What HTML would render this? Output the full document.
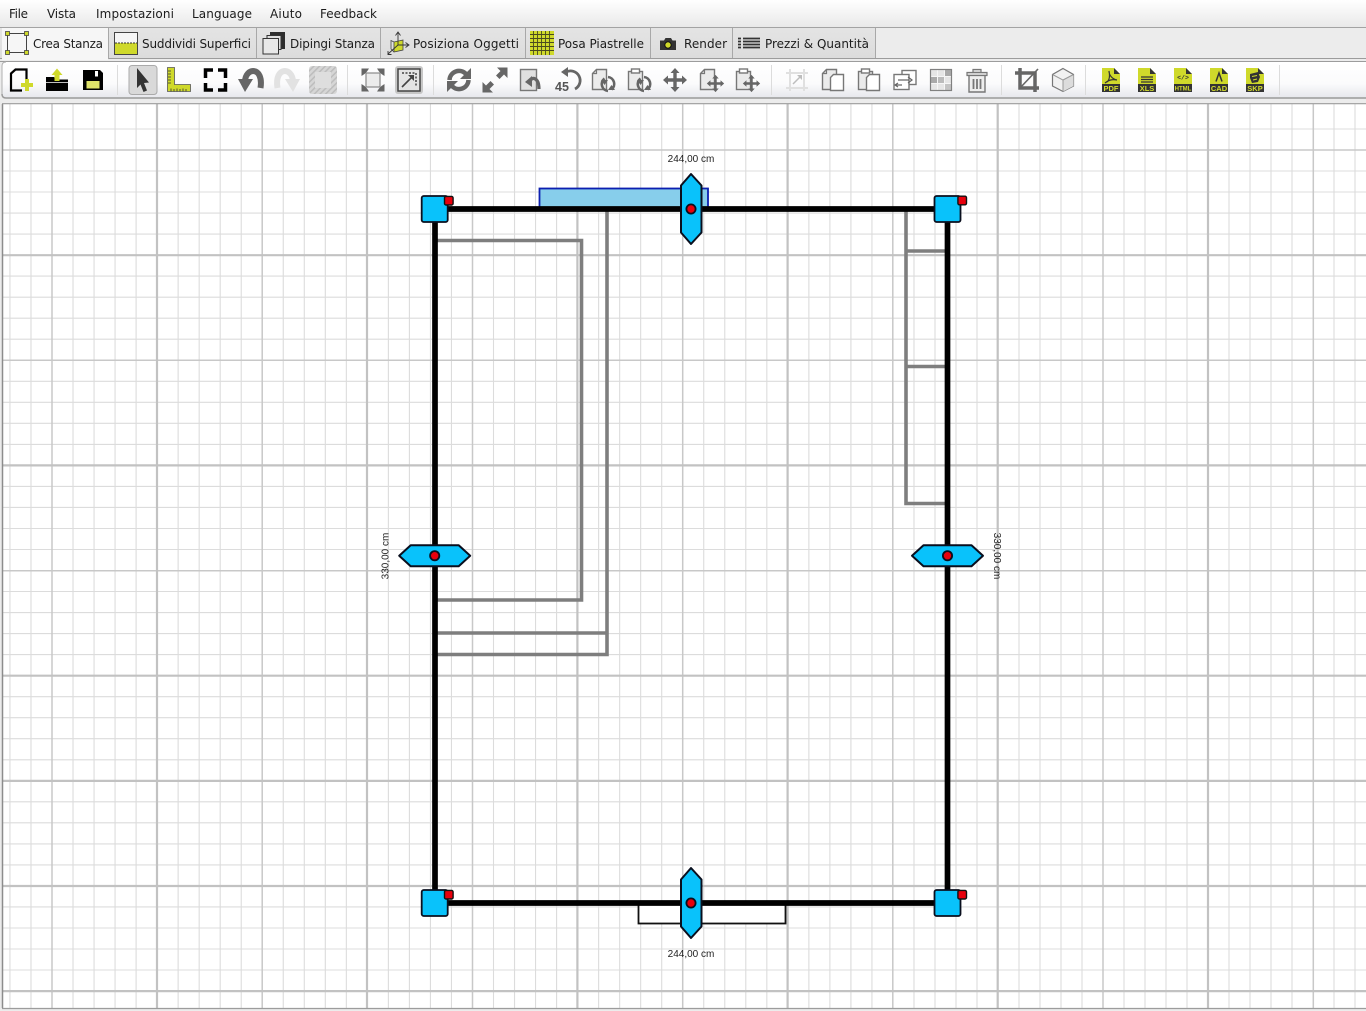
<!DOCTYPE html>
<html lang="it">
<head>
<meta charset="utf-8">
<title>Crea Stanza</title>
<style>
html,body{margin:0;padding:0;background:#ececec;width:1366px;height:1011px;overflow:hidden}
svg{display:block}
.m{font:12px "DejaVu Sans","Liberation Sans",sans-serif;fill:#1c1c1c}
.d{font:10px "Liberation Sans",Arial,sans-serif;fill:#222}
.f{font:bold 7.5px "Liberation Sans",Arial,sans-serif;fill:#d3dc2e}
</style>
</head>
<body>
<svg width="1366" height="1011" viewBox="0 0 1366 1011" xmlns="http://www.w3.org/2000/svg">
<defs>
<linearGradient id="mg" x1="0" y1="0" x2="0" y2="1"><stop offset="0" stop-color="#fff"/><stop offset="1" stop-color="#e9e9e9"/></linearGradient>
<linearGradient id="tb" x1="0" y1="0" x2="0" y2="1"><stop offset="0" stop-color="#fff"/><stop offset=".6" stop-color="#fbfbfc"/><stop offset="1" stop-color="#e6e7ec"/></linearGradient>
<linearGradient id="tab" x1="0" y1="0" x2="0" y2="1"><stop offset="0" stop-color="#e4e4e4"/><stop offset="1" stop-color="#dcdcdc"/></linearGradient>
<pattern id="ht" width="4" height="4" patternUnits="userSpaceOnUse" patternTransform="rotate(-45)"><rect width="4" height="4" fill="#d6d6d6"/><rect width="4" height="1.5" fill="#bdbdbd"/></pattern>
<g id="page"><path d="M-10.5 9.5V-6.5L-6.5-10.5H3.5V9.5Z" fill="#ebebeb" stroke="#777" stroke-width="1.4"/><path d="M-10.5-6.5H-6.5V-10.5" fill="none" stroke="#777" stroke-width="1.2"/></g>
<g id="clip"><rect x="-10.5" y="-8.5" width="14" height="18" fill="#ebebeb" stroke="#777" stroke-width="1.4"/><rect x="-7.5" y="-11" width="8" height="4" fill="#fff" stroke="#777" stroke-width="1.4"/></g>
<g id="rot"><path d="M-3.5-5.5A7 7 0 0 0 0 7" fill="none" stroke="#666" stroke-width="2.6"/><path d="M3.500 5.500A7 7 0 0 0 0-7" fill="none" stroke="#666" stroke-width="2.6"/><path d="M-7-5H0L-3.500 0ZM7 5H0L3.500 0Z" fill="#666" transform="translate(0,1)"/></g>
<g id="mv"><path d="M0-12L-4.500-7H-1.700V-1.700H-7V-4.500L-12 0L-7 4.500V1.700H-1.700V7H-4.500L0 12L4.500 7H1.700V1.700H7V4.500L12 0L7-4.500V-1.700H1.700V-7H4.500Z" fill="#666"/></g>
<g id="fi"><path d="M-9-12H3L9-6V12H-9Z" fill="#cfd92b"/><path d="M3-12L9-6H3Z" fill="#333"/><rect x="-9" y="4" width="18" height="8" fill="#333"/></g>
<g id="hv"><path d="M-10-23.500L0-35L10.500-23.500V23.500L0 35L-10 23.500Z" fill="#09c2fb" stroke="#0a0f1e" stroke-width="2" stroke-linejoin="round"/><circle r="4.600" fill="#e8000c" stroke="#0a0f1e" stroke-width="1.800"/></g>
<g id="hh"><path d="M-35.500 0L-24-10.500H24L35.500 0L24 10.500H-24Z" fill="#09c2fb" stroke="#0a0f1e" stroke-width="2" stroke-linejoin="round"/><circle r="4.600" fill="#e8000c" stroke="#0a0f1e" stroke-width="1.800"/></g>
<g id="cn"><rect x="-13" y="-13" width="26" height="26" rx="2" fill="#09c2fb" stroke="#0a0f1e" stroke-width="1.800"/></g>
<g id="rd"><rect x="-4.300" y="-4.300" width="8.600" height="8.600" rx="1.500" fill="#e8000c" stroke="#111" stroke-width="1.400"/></g>
</defs>

<rect width="1366" height="1011" fill="#ececec"/>
<!-- menu -->
<rect width="1366" height="27" fill="url(#mg)"/>
<rect y="27" width="1366" height="1" fill="#a3a3a3"/>
<text class="m" x="9" y="18" textLength="19">File</text>
<text class="m" x="47" y="18" textLength="29">Vista</text>
<text class="m" x="96" y="18" textLength="78">Impostazioni</text>
<text class="m" x="192" y="18" textLength="60">Language</text>
<text class="m" x="270" y="18" textLength="32">Aiuto</text>
<text class="m" x="320" y="18" textLength="57">Feedback</text>

<!-- tabs -->
<rect y="28" width="875" height="30" fill="url(#tab)"/>
<rect x="2" y="28" width="106" height="32" fill="#f6f6f6"/>
<rect y="58" width="1366" height="1" fill="#9c9c9c"/>
<rect y="61" width="1366" height="1" fill="#9c9c9c"/>
<rect x="2" y="58" width="106" height="1" fill="#f6f6f6"/>
<path d="M108.500 28V59M256.500 28V58M380.500 28V58M525.500 28V58M650.500 28V58M732.500 28V58M875.500 28V58" stroke="#a8a8a8" fill="none"/>
<text class="m" x="33" y="48" textLength="70">Crea Stanza</text>
<text class="m" x="142" y="48" textLength="109">Suddividi Superfici</text>
<text class="m" x="290" y="48" textLength="85">Dipingi Stanza</text>
<text class="m" x="413" y="48" textLength="106">Posiziona Oggetti</text>
<text class="m" x="558" y="48" textLength="86">Posa Piastrelle</text>
<text class="m" x="684" y="48" textLength="43">Render</text>
<text class="m" x="765" y="48" textLength="104">Prezzi &amp; Quantità</text>
<!-- tab icons -->
<rect x="7.500" y="33.500" width="19" height="19" fill="none" stroke="#444"/>
<g fill="#cfd92b" stroke="#444" stroke-width=".8"><rect x="5.500" y="31.500" width="4" height="4"/><rect x="24.500" y="31.500" width="4" height="4"/><rect x="5.500" y="50.500" width="4" height="4"/><rect x="24.500" y="50.500" width="4" height="4"/></g>
<rect x="114.500" y="32.500" width="23" height="22" fill="#f5f5f5" stroke="#444"/>
<rect x="115" y="43" width="22" height="11" fill="#cfd92b"/>
<path d="M115 43H137" stroke="#333" stroke-dasharray="2 1"/>
<path d="M270 32H285V49H281V36H270Z" fill="#2d2d2d"/>
<rect x="267" y="35.500" width="14" height="14" fill="#dedede" stroke="#333"/>
<rect x="263" y="38.500" width="15.500" height="15.500" fill="#e8e8e8" stroke="#333"/>
<path d="M394 42L403 40V50L394 52Z" fill="#cfd92b"/>
<path d="M394 42L403 40V50L394 52ZM394 42L391 40.500V49L394 52" fill="none" stroke="#444" stroke-width=".8"/>
<path d="M398 45V33M395.500 35.500L398 32L400.500 35.500M398 45H408M405.500 42.500L409 45L405.500 47.500M398 45L388 54M388 51V54.500H391.500" fill="none" stroke="#333" stroke-width=".9"/>
<rect x="530" y="31" width="24" height="24" fill="#cfd92b"/>
<path d="M530 34.500H554M530 38.500H554M530 42.500H554M530 46.500H554M530 50.500H554M533.500 31V55M537.500 31V55M541.500 31V55M545.500 31V55M549.500 31V55" stroke="#4a4a20" stroke-width=".9"/>
<path d="M660 40.500H664L665.500 38H671L672.500 40.500H676V50H660Z" fill="#333"/>
<circle cx="668" cy="45" r="3.200" fill="#cfd92b" stroke="#111"/>
<path d="M738 38.500H741M743 38.500H760M738 41.500H741M743 41.500H760M738 44.500H741M743 44.500H760M738 47.500H741M743 47.500H760" stroke="#333" stroke-width="1.700"/>

<!-- toolbar -->
<path d="M2 66Q2 62 6 62H1366V98H6Q2 98 2 94Z" fill="url(#tb)"/>
<path d="M2 94V66Q2 62 6 62" fill="none" stroke="#b0b0b0"/>
<path d="M2 94Q2 98 6 98H1366" fill="none" stroke="#9a9a9a" stroke-width="1.500"/>
<path d="M117.500 65V95M347.500 65V95M433.500 65V95M771.500 65V95M1001.500 65V95M1085.500 65V95M1279.500 65V95" stroke="#dcdcdc"/>

<!-- new -->
<g transform="translate(21,80)"><path d="M1 10.500H-10V-6.500L-5.500-10.500H5.500V-1" fill="none" stroke="#000" stroke-width="2.200"/><path d="M6 -1V11M0 5H12" stroke="#cfd92b" stroke-width="4"/></g>
<!-- open -->
<g transform="translate(57,80)"><path d="M-11 11V-3H-3L-1-.5H11V11Z" fill="#000"/><path d="M-11 2.500H11" stroke="#fff" stroke-width=".8"/><path d="M0-11.500L5.500-5H2.500V1H-2.500V-5H-5.500Z" fill="#cfd92b"/></g>
<!-- save -->
<g transform="translate(93,80)"><path d="M-10-10H7L10-7V10H-10Z" fill="#000"/><rect x="-6.500" y="1" width="13" height="7.500" fill="#dfe36a"/><rect x="2" y="-9" width="3" height="5.500" fill="#fff"/></g>
<!-- pointer -->
<rect x="129" y="65.500" width="28" height="29" rx="3" fill="#d9d9d9" stroke="#aaa"/>
<path d="M137 68L149 82.500L144 83L147 90.500L143.500 92L140.500 84.500L137 88Z" fill="#333"/>
<!-- ruler -->
<g transform="translate(179,80)"><path d="M-11.500-12.500H-4.500V4.500H11.500V11.500H-11.500Z" fill="#cfd92b" stroke="#555" stroke-width=".8"/><path d="M-11-9H-8M-11-6H-8M-11-3H-8M-11 0H-8M-11 3H-8M-8 11.500V8.500M-5 11.500V9M-2 11.500V8.500M1 11.500V9M4 11.500V8.500M7 11.500V9" stroke="#333" stroke-width=".8"/></g>
<!-- frame -->
<path d="M205.500 78V70H213M218 70H225.500V78M225.500 83V90H218M213 90H205.500V83" fill="none" stroke="#000" stroke-width="3.500"/>
<!-- undo / redo -->
<g transform="translate(251,80)"><path d="M-6 2C-6-13 13-14 9.500 8" fill="none" stroke="#666" stroke-width="6"/><path d="M-13-1H2L-6 12Z" fill="#666"/></g>
<g transform="translate(287,80) scale(-1,1)"><path d="M-6 2C-6-13 13-14 9.500 8" fill="none" stroke="#e2e2e2" stroke-width="6"/><path d="M-13-1H2L-6 12Z" fill="#e2e2e2"/></g>
<!-- hatch -->
<rect x="309" y="66" width="28" height="28" rx="3" fill="url(#ht)"/>
<rect x="315" y="72" width="16" height="16" fill="#dedede"/>
<!-- fit -->
<g transform="translate(373,80)"><rect x="-7" y="-7" width="14" height="14" fill="#ececec" stroke="#8a8a8a" stroke-width="1.200"/><path d="M-11.500-11.500H-4L-6-8.500L-8.500-6L-11.500-4ZM11.500-11.500H4L6-8.500L8.500-6L11.500-4ZM-11.500 11.500H-4L-6 8.500L-8.500 6L-11.500 4ZM11.500 11.500H4L6 8.500L8.500 6L11.500 4Z" fill="#666"/></g>
<!-- zoom box -->
<rect x="395" y="66" width="28" height="28" rx="3" fill="#c6c6c6"/>
<g transform="translate(409,80)"><rect x="-11" y="-11" width="22" height="22" fill="#e4e4e4" stroke="#444" stroke-width="1.500"/><path d="M-7-7H7V7" fill="none" stroke="#444" stroke-width="1.500" stroke-dasharray="2 1.500"/><path d="M-7 7L3-3" stroke="#444" stroke-width="1.600"/><path d="M5-5V1L-1-5Z" fill="#444"/></g>
<!-- refresh -->
<g transform="translate(459,80)" fill="none" stroke="#666" stroke-width="4.500"><path d="M-9.500 0A9.500 9.500 0 0 1 7-6"/><path d="M9.500 0A9.500 9.500 0 0 1-7 6"/><path d="M12-12V-1H1Z" fill="#666" stroke="none"/><path d="M-12 12V1H-1Z" fill="#666" stroke="none"/></g>
<!-- expand -->
<g transform="translate(495,80)"><path d="M12.500-12.500V-2L9-5.500L4.500-1L1-4.500L5.500-9L2-12.500Z" fill="#666"/><path d="M-12.500 12.500V2L-9 5.500L-4.500 1L-1 4.500L-5.500 9L-2 12.500Z" fill="#666"/></g>
<!-- page back -->
<g transform="translate(531,80)"><rect x="-10.500" y="-10.500" width="16" height="21" fill="#e0e0e0" stroke="#777" stroke-width="1.400"/><path d="M-1 2C0-4 8-3 8 9" fill="none" stroke="#666" stroke-width="3.200"/><path d="M-6 2L1-4V7Z" fill="#666"/></g>
<!-- 45 -->
<g transform="translate(567,80)"><path d="M-1-8A9.500 9.500 0 0 1 8 9" fill="none" stroke="#666" stroke-width="2.800"/><path d="M-6-8L1-13V-3Z" fill="#666"/><text x="-12" y="11" font-family="Liberation Sans, Arial, sans-serif" font-size="12.500" font-weight="bold" fill="#555">45</text></g>
<!-- page rotate -->
<g transform="translate(603,80)"><use href="#page"/><g transform="translate(5,4)"><use href="#rot"/></g></g>
<g transform="translate(639,80)"><use href="#clip"/><g transform="translate(5,4)"><use href="#rot"/></g></g>
<!-- move -->
<g transform="translate(675,80)"><use href="#mv"/></g>
<g transform="translate(711,80)"><use href="#page"/><g transform="translate(4.500,3.500) scale(.72)"><use href="#mv"/></g></g>
<g transform="translate(747,80)"><use href="#clip"/><g transform="translate(4.500,3.500) scale(.72)"><use href="#mv"/></g></g>
<!-- faded crop arrow -->
<g transform="translate(797,80)" fill="none" stroke="#e0e0e0" stroke-width="2"><path d="M-11-7H11M-11 8H11M-7-11V11M7-11V11"/><path d="M-4 4L4-4" stroke="#bdbdbd" stroke-width="1.500"/><path d="M5-5V0L0-5Z" fill="#bdbdbd" stroke="none"/></g>
<!-- copy -->
<g transform="translate(833,80)"><use href="#page"/><path d="M-2.500 10.500V-2.500L.5-5.500H10.500V10.500Z" fill="#fff" stroke="#777" stroke-width="1.400"/></g>
<g transform="translate(869,80)"><use href="#clip"/><path d="M-2.500 10.500V-2.500L.5-5.500H10.500V10.500Z" fill="#fff" stroke="#777" stroke-width="1.400"/></g>
<!-- replace -->
<g transform="translate(905,80)"><rect x="-3" y="-9.500" width="14" height="14" fill="#fff" stroke="#777" stroke-width="1.400"/><rect x="-11" y="-5.500" width="15" height="15" fill="#fff" stroke="#777" stroke-width="1.400"/><path d="M-7 0H4M3-3L7 0L3 3M-3 5H-9M-7 3L-10 5L-7 7" fill="none" stroke="#666" stroke-width="1.200"/></g>
<!-- checker -->
<g transform="translate(941,80)"><rect x="-10.500" y="-10.500" width="21" height="21" fill="#e6e6e6"/><rect x="3.500" y="-10.500" width="7" height="7" fill="#aaa"/><rect x="-10.500" y="-3.500" width="7" height="7" fill="#aaa"/><rect x="-3.500" y="-3.500" width="7" height="7" fill="#bbb"/><rect x="3.500" y="3.500" width="7" height="7" fill="#c4c4c4"/><path d="M-10.500-3.500H10.500M-10.500 3.500H10.500M-3.500-10.500V10.500M3.500-10.500V10.500" stroke="#f6f6f6"/><rect x="-10.500" y="-10.500" width="21" height="21" fill="none" stroke="#808080" stroke-width="1.200"/></g>
<!-- trash -->
<g transform="translate(977,80)"><path d="M-8-6V12H8V-6Z" fill="#eee" stroke="#777" stroke-width="1.400"/><path d="M-10-7.500H10V-4.500H-10ZM-4-10.500H4V-7.500H-4Z" fill="#ddd" stroke="#777" stroke-width="1.200"/><path d="M-3.500-1V9M0-1V9M3.500-1V9" stroke="#777" stroke-width="1.800"/></g>
<!-- crop -->
<g transform="translate(1027,80)" fill="none" stroke="#666"><path d="M-7-12V8H12M-12-7H8V12" stroke-width="3.500"/><path d="M-7 8L11-11" stroke-width="1.600"/></g>
<!-- cube -->
<g transform="translate(1063,80)"><path d="M0-11.500L10.500-5.500V6L0 11.500L-10.500 6V-5.500Z" fill="#f1f1f1" stroke="#777" stroke-width="1.200"/><path d="M0 0L10.500-5.500V6L0 11.500Z" fill="#dcdcdc"/><path d="M0 11.500V0L-10.500-5.500M0 0L10.500-5.500" fill="none" stroke="#999"/></g>
<!-- file icons -->
<g transform="translate(1111,80)"><use href="#fi"/><path d="M-4 2C0-1-2-9-2-9C-2-5 1-1 6 0C1-1-2 0-6 3" fill="none" stroke="#333" stroke-width="1.200"/><text class="f" x="0" y="10.800" text-anchor="middle">PDF</text></g>
<g transform="translate(1147,80)"><use href="#fi"/><path d="M-6-3H6M-6-.5H6M-6 2H6" stroke="#333" stroke-width="1.200"/><text class="f" x="0" y="10.800" text-anchor="middle">XLS</text></g>
<g transform="translate(1183,80)"><use href="#fi"/><text x="0" y="-.5" text-anchor="middle" font-family="Liberation Mono, monospace" font-size="6.500" font-weight="bold" fill="#333">&lt;/&gt;</text><text class="f" x="0" y="10.500" text-anchor="middle" style="font-size:6px">HTML</text></g>
<g transform="translate(1219,80)"><use href="#fi"/><path d="M-3 1.500L0-7L3 1.500" fill="none" stroke="#333" stroke-width="1.500"/><text class="f" x="0" y="10.800" text-anchor="middle">CAD</text></g>
<g transform="translate(1255,80)"><use href="#fi"/><path d="M-5-6L3-8L5-3L3 2L-3 3L-5-2Z" fill="#333"/><path d="M-3-3.500L2-4.500M-2 0L2-1" stroke="#cfd92b" stroke-width="1"/><text class="f" x="0" y="10.800" text-anchor="middle">SKP</text></g>

<!-- canvas -->
<rect x="3" y="104" width="1363" height="904" fill="#fff"/>
<path d="M9.950 104V1008M30.980 104V1008M73.020 104V1008M94.050 104V1008M115.070 104V1008M136.100 104V1008M178.140 104V1008M199.170 104V1008M220.190 104V1008M241.220 104V1008M283.260 104V1008M304.290 104V1008M325.310 104V1008M346.340 104V1008M388.380 104V1008M409.410 104V1008M430.430 104V1008M451.460 104V1008M493.500 104V1008M514.530 104V1008M535.550 104V1008M556.580 104V1008M598.620 104V1008M619.650 104V1008M640.670 104V1008M661.700 104V1008M703.740 104V1008M724.770 104V1008M745.790 104V1008M766.820 104V1008M808.860 104V1008M829.890 104V1008M850.910 104V1008M871.940 104V1008M913.980 104V1008M935 104V1008M956 104V1008M977 104V1008M1019 104V1008M1040 104V1008M1061 104V1008M1082 104V1008M1124 104V1008M1145 104V1008M1166 104V1008M1187 104V1008M1229 104V1008M1250 104V1008M1271 104V1008M1292 104V1008M1334 104V1008M1355 104V1008" stroke="#dcdcdc" stroke-width="1.100" fill="none"/>
<path d="M3 129H1366M3 171H1366M3 192H1366M3 213.100H1366M3 234.100H1366M3 276.100H1366M3 297.200H1366M3 318.200H1366M3 339.200H1366M3 381.300H1366M3 402.300H1366M3 423.300H1366M3 444.400H1366M3 486.400H1366M3 507.400H1366M3 528.500H1366M3 549.500H1366M3 591.500H1366M3 612.600H1366M3 633.600H1366M3 654.600H1366M3 696.700H1366M3 717.700H1366M3 738.700H1366M3 759.800H1366M3 801.800H1366M3 822.800H1366M3 843.900H1366M3 864.900H1366M3 906.900H1366M3 928H1366M3 949H1366M3 970H1366" stroke="#dcdcdc" stroke-width="1.100" fill="none"/>
<path d="M52 104V1008M262.200 104V1008M472.500 104V1008M682.700 104V1008M892.800 104V1008M1103 104V1008M1313.300 104V1008M3 150H1366M3 360.200H1366M3 570.700H1366" stroke="#c8c8c8" stroke-width="1.500" fill="none"/>
<path d="M157 104V1008M367 104V1008M577.400 104V1008M787.600 104V1008M997.700 104V1008M1208 104V1008M3 255.200H1366M3 465.400H1366M3 675.700H1366M3 780.900H1366M3 886H1366M3 991.100H1366" stroke="#c2c2c2" stroke-width="2.200" fill="none"/>
<path d="M2.500 104V1008" stroke="#8c8c8c" stroke-width="1.500"/>
<path d="M2 103.700H1366M2 1008.500H1366" stroke="#9c9c9c" stroke-width="1.200"/>

<!-- furniture -->
<path d="M437 240.500H581.500V600H437M607 211V654.500H437M437 633H607M906 211V503.500H946M906 251H946M906 366.500H946" fill="none" stroke="#7e7e7e" stroke-width="3.600"/>
<!-- window -->
<rect x="539.500" y="188.500" width="168.500" height="19" fill="#87ceeb" stroke="#0c1fb0" stroke-width="1.800"/>
<!-- door -->
<rect x="638.500" y="904" width="147" height="19.500" fill="#fff" stroke="#111" stroke-width="1.800"/>
<!-- walls -->
<path d="M435 209H947.500V903H435Z" fill="none" stroke="#000" stroke-width="5.700"/>
<!-- handles -->
<use href="#cn" x="434.700" y="209"/>
<use href="#cn" x="947.500" y="209"/>
<use href="#cn" x="434.700" y="903"/>
<use href="#cn" x="947.500" y="903"/>
<use href="#rd" x="448.800" y="200.700"/>
<use href="#rd" x="962.200" y="200.500"/>
<use href="#rd" x="448.800" y="894.700"/>
<use href="#rd" x="962.200" y="894.700"/>
<use href="#hv" x="691" y="209"/>
<use href="#hv" x="691" y="903"/>
<use href="#hh" x="434.700" y="555.700"/>
<use href="#hh" x="947.500" y="555.700"/>
<!-- dims -->
<text class="d" x="691" y="162" text-anchor="middle">244,00 cm</text>
<text class="d" x="691" y="957" text-anchor="middle">244,00 cm</text>
<text class="d" text-anchor="middle" transform="translate(388.500,556) rotate(-90)">330,00 cm</text>
<text class="d" text-anchor="middle" transform="translate(994,556) rotate(90)">330,00 cm</text>
</svg>
</body>
</html>
